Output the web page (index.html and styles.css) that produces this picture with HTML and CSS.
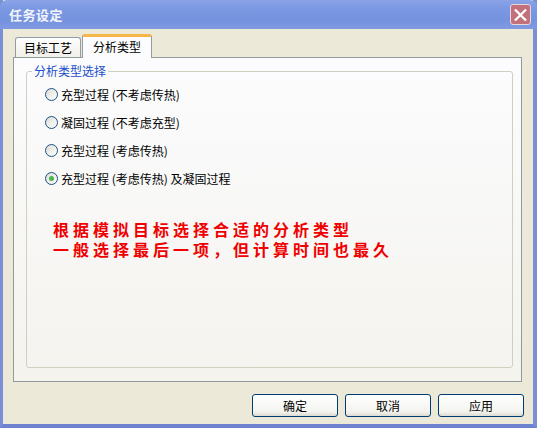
FILE: index.html
```html
<!DOCTYPE html>
<html>
<head>
<meta charset="utf-8">
<link rel="stylesheet" href="styles.css">
</head>
<body>
<div class="window">
  <div class="titlebar">
    <span class="title">任务设定</span>
    <span class="close"><svg width="20" height="20" viewBox="0 0 20 20"><path d="M5 5 L15 15 M15 5 L5 15" stroke="#fff" stroke-width="2.4" stroke-linecap="square"/></svg></span>
  </div>
  <div class="client">
    <div class="tabs">
      <div class="tab">目标工艺</div>
      <div class="tab active">分析类型</div>
    </div>
    <div class="panel">
      <div class="group">
        <div class="legend">分析类型选择</div>
        <div class="radios">
          <div class="radio"><span class="dot"></span>充型过程 (不考虑传热)</div>
          <div class="radio"><span class="dot"></span>凝固过程 (不考虑充型)</div>
          <div class="radio"><span class="dot"></span>充型过程 (考虑传热)</div>
          <div class="radio"><span class="dot on"></span>充型过程 (考虑传热) 及凝固过程</div>
        </div>
        <div class="note">
          <div class="line">根据模拟目标选择合适的分析类型</div>
          <div class="line">一般选择最后一项，但计算时间也最久</div>
        </div>
      </div>
    </div>
    <div class="buttons">
      <div class="btn">确定</div>
      <div class="btn">取消</div>
      <div class="btn">应用</div>
    </div>
  </div>
</div>
</body>
</html>
```
FILE: styles.css
```css
* { box-sizing: border-box; }
body {
  margin: 0;
  font-family: "Noto Sans CJK SC", "Noto Sans", sans-serif;
  font-size: 12px;
  background: #ece9d8;
}
.window {
  width: 537px;
  height: 428px;
  display: flex;
  flex-direction: column;
  background: #ece9d8;
  border-left: 3px solid #7b8fd6;
  border-right: 4px solid #7b8fd6;
  border-bottom: 4px solid #6f82cf;
}
.titlebar {
  height: 29px;
  margin: 0 -4px 0 -3px;
  background: linear-gradient(#8aa3e6 0%, #7b98e3 30%, #7592df 70%, #819be2 100%);
  border-radius: 7px 7px 0 0;
  display: flex;
  align-items: center;
  justify-content: space-between;
  padding: 0 6px 0 9px;
}
.title {
  color: #f2f4fb;
  font-weight: bold;
  font-size: 13px;
  letter-spacing: 0.5px;
}
.close {
  width: 21px;
  height: 21px;
  border: 1px solid #e8d6dc;
  border-radius: 3px;
  background: #c2707a;
  display: flex;
  align-items: center;
  justify-content: center;
}
.client {
  flex: 1;
  display: flex;
  flex-direction: column;
  padding: 4px 11px 0 10px;
}
.tabs {
  display: flex;
  align-items: flex-end;
  height: 24px;
  padding-left: 2px;
}
.tab {
  height: 20px;
  padding: 0;
  white-space: nowrap;
  display: flex;
  align-items: center;
  background: linear-gradient(#fefefe, #f0efe8);
  border: 1px solid #939ba5;
  border-bottom: none;
  border-radius: 3px 3px 0 0;
  color: #000;
  width: 66px;
  justify-content: center;
  margin-right: 1px;
}
.tab.active {
  height: 24px;
  width: 70px;
  margin-bottom: -1px;
  position: relative;
  background: #fcfcfe;
  border-top: 3px solid #f6b64a;
  z-index: 1;
  padding-bottom: 2px;
}
.panel {
  height: 325px;
  border: 1px solid #919b9c;
  background: linear-gradient(#fcfcfe, #f4f3ee);
  padding: 13px 8px 13px 12px;
}
.group {
  height: 100%;
  border: 1px solid #d0d0bf;
  border-radius: 3px;
  position: relative;
  padding: 14px 0 0 18px;
}
.legend {
  position: absolute;
  top: -9px;
  left: 5px;
  padding: 0 2px;
  background: #fbfbfc;
  color: #1b4fc9;
  line-height: 16px;
}
.radios {
  display: flex;
  flex-direction: column;
  gap: 12px;
}
.radio {
  display: flex;
  align-items: center;
  height: 16px;
  gap: 3px;
  color: #000;
}
.dot {
  width: 13px;
  height: 13px;
  border-radius: 50%;
  border: 1px solid #1d5180;
  background: linear-gradient(135deg, #dcdcd5, #fff);
  display: flex;
  align-items: center;
  justify-content: center;
}
.dot.on::after {
  content: "";
  width: 5px;
  height: 5px;
  border-radius: 50%;
  background: #4bb649;
}
.note {
  margin: 35px 0 0 8px;
  color: #f00000;
  font-weight: bold;
  font-size: 16px;
  letter-spacing: 4px;
  white-space: nowrap;
  display: flex;
  flex-direction: column;
  gap: 3px;
}
.line {
  height: 17px;
  line-height: 17px;
}
.buttons {
  display: flex;
  justify-content: flex-end;
  gap: 7px;
  padding-top: 12px;
  margin-right: -2px;
}
.btn {
  width: 86px;
  height: 23px;
  border: 1px solid #003c74;
  border-radius: 3px;
  background: linear-gradient(#ffffff, #f3f3ef 80%, #dcdad0);
  display: flex;
  align-items: center;
  justify-content: center;
  color: #000;
}
```
